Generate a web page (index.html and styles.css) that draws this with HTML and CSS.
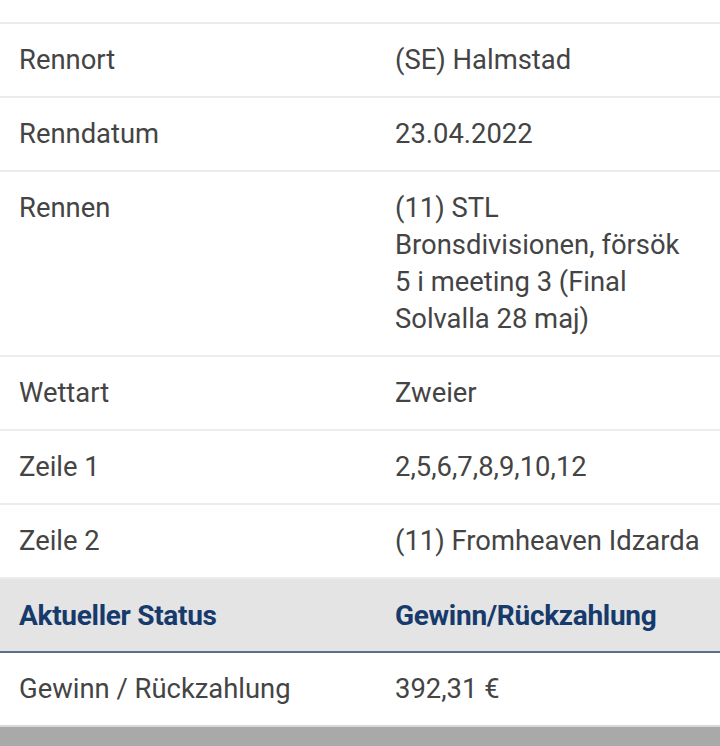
FILE: index.html
```html
<!DOCTYPE html>
<html lang="de">
<head>
  <meta charset="UTF-8" />
  <meta name="viewport" content="width=device-width, initial-scale=1.0" />
  <title>Wettschein Details</title>
  <link rel="stylesheet" href="styles.css">
</head>

<body>
  <!-- Wettdetails -->
  <table class="details">
    <colgroup>
      <col class="col-label">
      <col>
    </colgroup>
    <tr>
      <td>Bahn</td>
      <td>1, 2</td>
    </tr>
    <tr>
      <td>Rennort</td>
      <td>(SE) Halmstad</td>
    </tr>
    <tr>
      <td>Renndatum</td>
      <td>23.04.2022</td>
    </tr>
    <tr>
      <td>Rennen</td>
      <td>(11) STL Bronsdivisionen, försök 5 i meeting 3 (Final Solvalla 28 maj)</td>
    </tr>
    <tr>
      <td>Wettart</td>
      <td>Zweier</td>
    </tr>
    <tr>
      <td>Zeile 1</td>
      <td>2,5,6,7,8,9,10,12</td>
    </tr>
    <tr>
      <td>Zeile 2</td>
      <td>(11) Fromheaven Idzarda</td>
    </tr>

    <!-- Status -->
    <tr class="head">
      <th>Aktueller Status</th>
      <th>Gewinn/Rückzahlung</th>
    </tr>
    <tr class="last">
      <td>Gewinn / Rückzahlung</td>
      <td>392,31 €</td>
    </tr>
  </table>

  <div class="bottom-bar"></div>
</body>

</html>
```

FILE: styles.css
```css
:root {
  --text: #444444;
  --line: #ececec;
  --head-bg: #e4e4e4;
  --head-text: #173a6c;
  --head-line: #56728f;
  --bar: #a9a9a9;
}

* {
  margin: 0;
  padding: 0;
  box-sizing: border-box;
}

html, body {
  height: 100%;
  overflow: hidden;
}

body {
  font-family: Roboto, 'Noto Sans', sans-serif;
  font-size: 27.4px;
  line-height: 37px;
  color: var(--text);
  background: #fff;
  display: flex;
  flex-direction: column;
}

.details {
  width: 100%;
  border-collapse: collapse;
  table-layout: fixed;
  margin-top: -50px;
}

.col-label {
  width: 376px;
}

.details td, .details th {
  padding: 18px 19px 17px;
  vertical-align: top;
  text-align: left;
  border-bottom: 2px solid var(--line);
}

.details td + td, .details th + th {
  padding-right: 20px;
}

.details th {
  font-size: 28px;
  font-weight: 700;
  letter-spacing: -0.3px;
  color: var(--head-text);
}

.head {
  background: var(--head-bg);
}

.head th {
  border-bottom: 2px solid var(--head-line);
}

.last td {
  border-bottom: 2px solid #d9d9d9;
}

.bottom-bar {
  flex: 1;
  background: var(--bar);
}
```
